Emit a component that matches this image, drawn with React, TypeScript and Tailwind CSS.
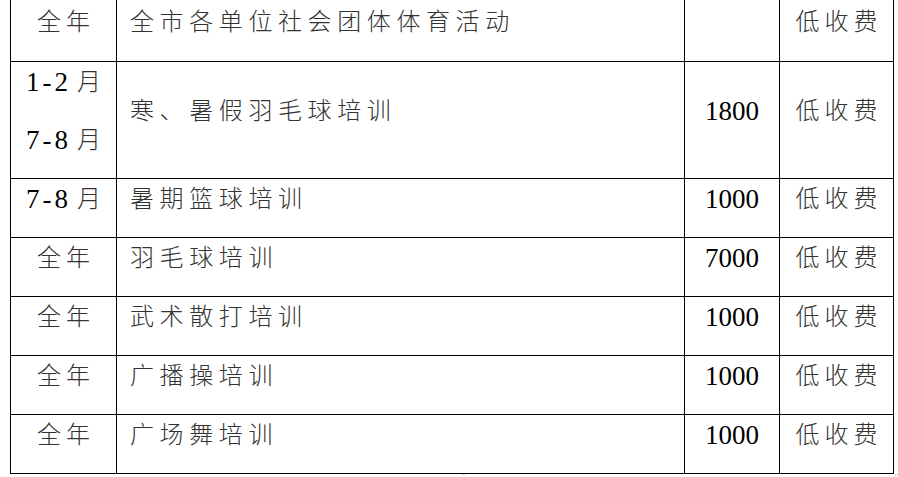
import React from 'react'

interface Row {
  period: string[]
  name: string
  amount: string
  note: string
  height: string
  pad: string
  gap?: string
}

const ROWS: Row[] = [
  { period: ['全年'], name: '全市各单位社会团体体育活动', amount: '', note: '低收费', height: 'h-[62px]', pad: 'pt-[2px]' },
  { period: ['1-2', '7-8'], name: '寒、暑假羽毛球培训', amount: '1800', note: '低收费', height: 'h-[117px]', pad: 'pt-0', gap: 'gap-[18px]' },
  { period: ['7-8'], name: '暑期篮球培训', amount: '1000', note: '低收费', height: 'h-[59px]', pad: 'pt-0' },
  { period: ['全年'], name: '羽毛球培训', amount: '7000', note: '低收费', height: 'h-[59px]', pad: 'pt-0' },
  { period: ['全年'], name: '武术散打培训', amount: '1000', note: '低收费', height: 'h-[59px]', pad: 'pt-0' },
  { period: ['全年'], name: '广播操培训', amount: '1000', note: '低收费', height: 'h-[59px]', pad: 'pt-0' },
  { period: ['全年'], name: '广场舞培训', amount: '1000', note: '低收费', height: 'h-[59px]', pad: 'pt-0' },
]

function Period({ value }: { value: string }) {
  if (value === '全年') {
    return (
      <div className="h-[40px] leading-[40px] text-[24px] tracking-[5px] pl-[5px] font-light text-[#333]">
        全年
      </div>
    )
  }
  // month range like "1-2 月"
  return (
    <div className="h-[40px] leading-[40px] flex items-center">
      <span className="text-[27px] tracking-[3px] text-black">{value}</span>
      <span className="ml-[6px] text-[24px] font-light text-[#333]">月</span>
    </div>
  )
}

export default function App() {
  return (
    <div
      className="w-[898px] h-[477px] bg-white overflow-hidden"
      style={{ fontFamily: '"Liberation Serif", "Noto Sans CJK SC", serif' }}
    >
      <div className="ml-[10px] w-[884px] border-l border-black">
        {ROWS.map((row, i) => {
          const single = row.period.length === 1
          return (
            <div
              key={i}
              className={`grid grid-cols-[106px_568px_95px_114px] border-b border-black ${row.height}`}
            >
              {/* period */}
              <div className={`border-r border-black flex flex-col items-center ${row.pad} ${row.gap ?? ''}`}>
                {row.period.map((p, j) => (
                  <Period key={j} value={p} />
                ))}
              </div>
              {/* item */}
              <div className={`border-r border-black flex pl-[13px] ${single ? row.pad : 'items-center pb-[19px]'}`}>
                <div className="h-[40px] leading-[40px] text-[24px] tracking-[5.6px] font-light text-[#333]">
                  {row.name}
                </div>
              </div>
              {/* amount */}
              <div className={`border-r border-black flex justify-center ${single ? row.pad : 'items-center pb-[19px]'}`}>
                <div className="h-[40px] leading-[40px] text-[27px] text-black">{row.amount}</div>
              </div>
              {/* note */}
              <div className={`border-r border-black flex justify-center ${single ? row.pad : 'items-center pb-[19px]'}`}>
                <div className="h-[40px] leading-[40px] text-[24px] tracking-[5px] pl-[5px] font-light text-[#333]">
                  {row.note}
                </div>
              </div>
            </div>
          )
        })}
      </div>
      <div className="flex justify-between ml-[10px] w-[888px] h-[4px]">
        <div />
        <div className="flex gap-[430px] items-start">
          <div className="w-[3px] h-[3px] border-t border-gray-300" />
          <div className="w-[3px] h-[3px] border-l border-t border-gray-300" />
        </div>
      </div>
    </div>
  )
}
